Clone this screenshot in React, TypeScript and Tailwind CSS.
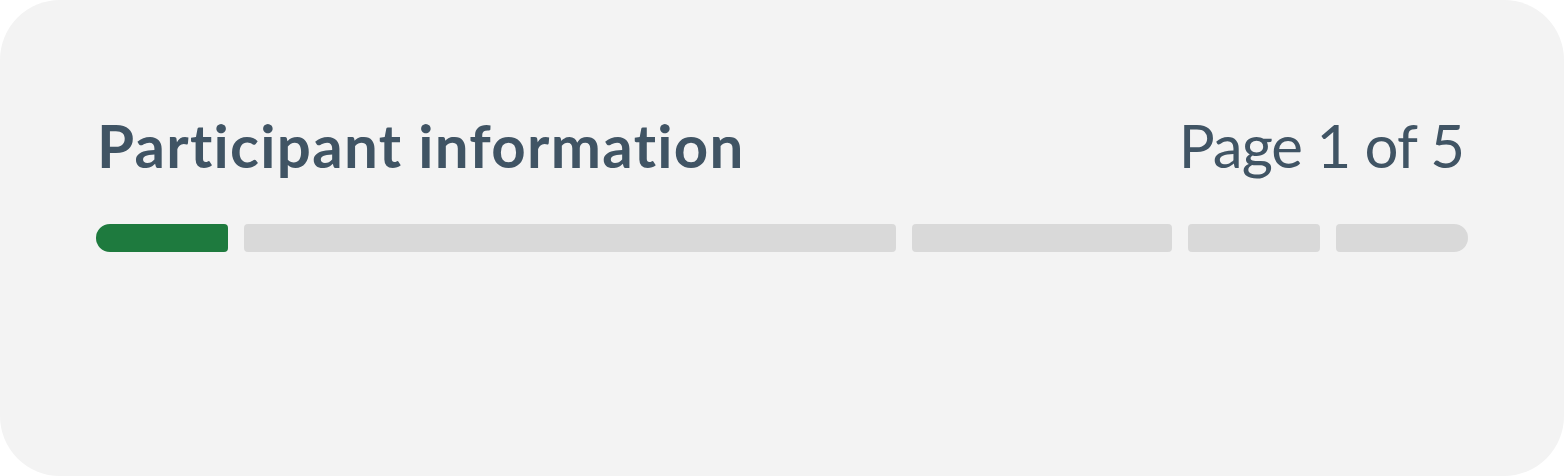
export default function App() {
  const segments = [
    { w: "w-[132px]", cls: "bg-[#1e7a3e] rounded-l-[14px] rounded-r-[4px]" },
    { w: "w-[652px]", cls: "bg-[#d9d9d9] rounded-[4px]" },
    { w: "w-[260px]", cls: "bg-[#d9d9d9] rounded-[4px]" },
    { w: "w-[132px]", cls: "bg-[#d9d9d9] rounded-[4px]" },
    { w: "w-[132px]", cls: "bg-[#d9d9d9] rounded-l-[4px] rounded-r-[14px]" },
  ];
  return (
    <div className="w-[1564px] h-[476px] bg-white">
      <div
        className="h-full rounded-[60px] bg-[#f3f3f3] px-[96px] pt-[108px] [font-variant-ligatures:none]"
        style={{ fontFamily: "Lato, 'Noto Sans', sans-serif" }}
      >
        <div className="flex items-baseline justify-between text-[#405464]">
          <h1 className="text-[60px] font-bold tracking-[1.3px] leading-[74px] pl-[1px]">Participant information</h1>
          <span className="text-[60px] font-normal tracking-[-1px] leading-[74px] pr-[4px]">Page 1 of 5</span>
        </div>
        <div className="mt-[42px] flex gap-[16px]">
          {segments.map((s, i) => (
            <div key={i} className={`h-[28px] ${s.w} ${s.cls}`} />
          ))}
        </div>
      </div>
    </div>
  );
}
